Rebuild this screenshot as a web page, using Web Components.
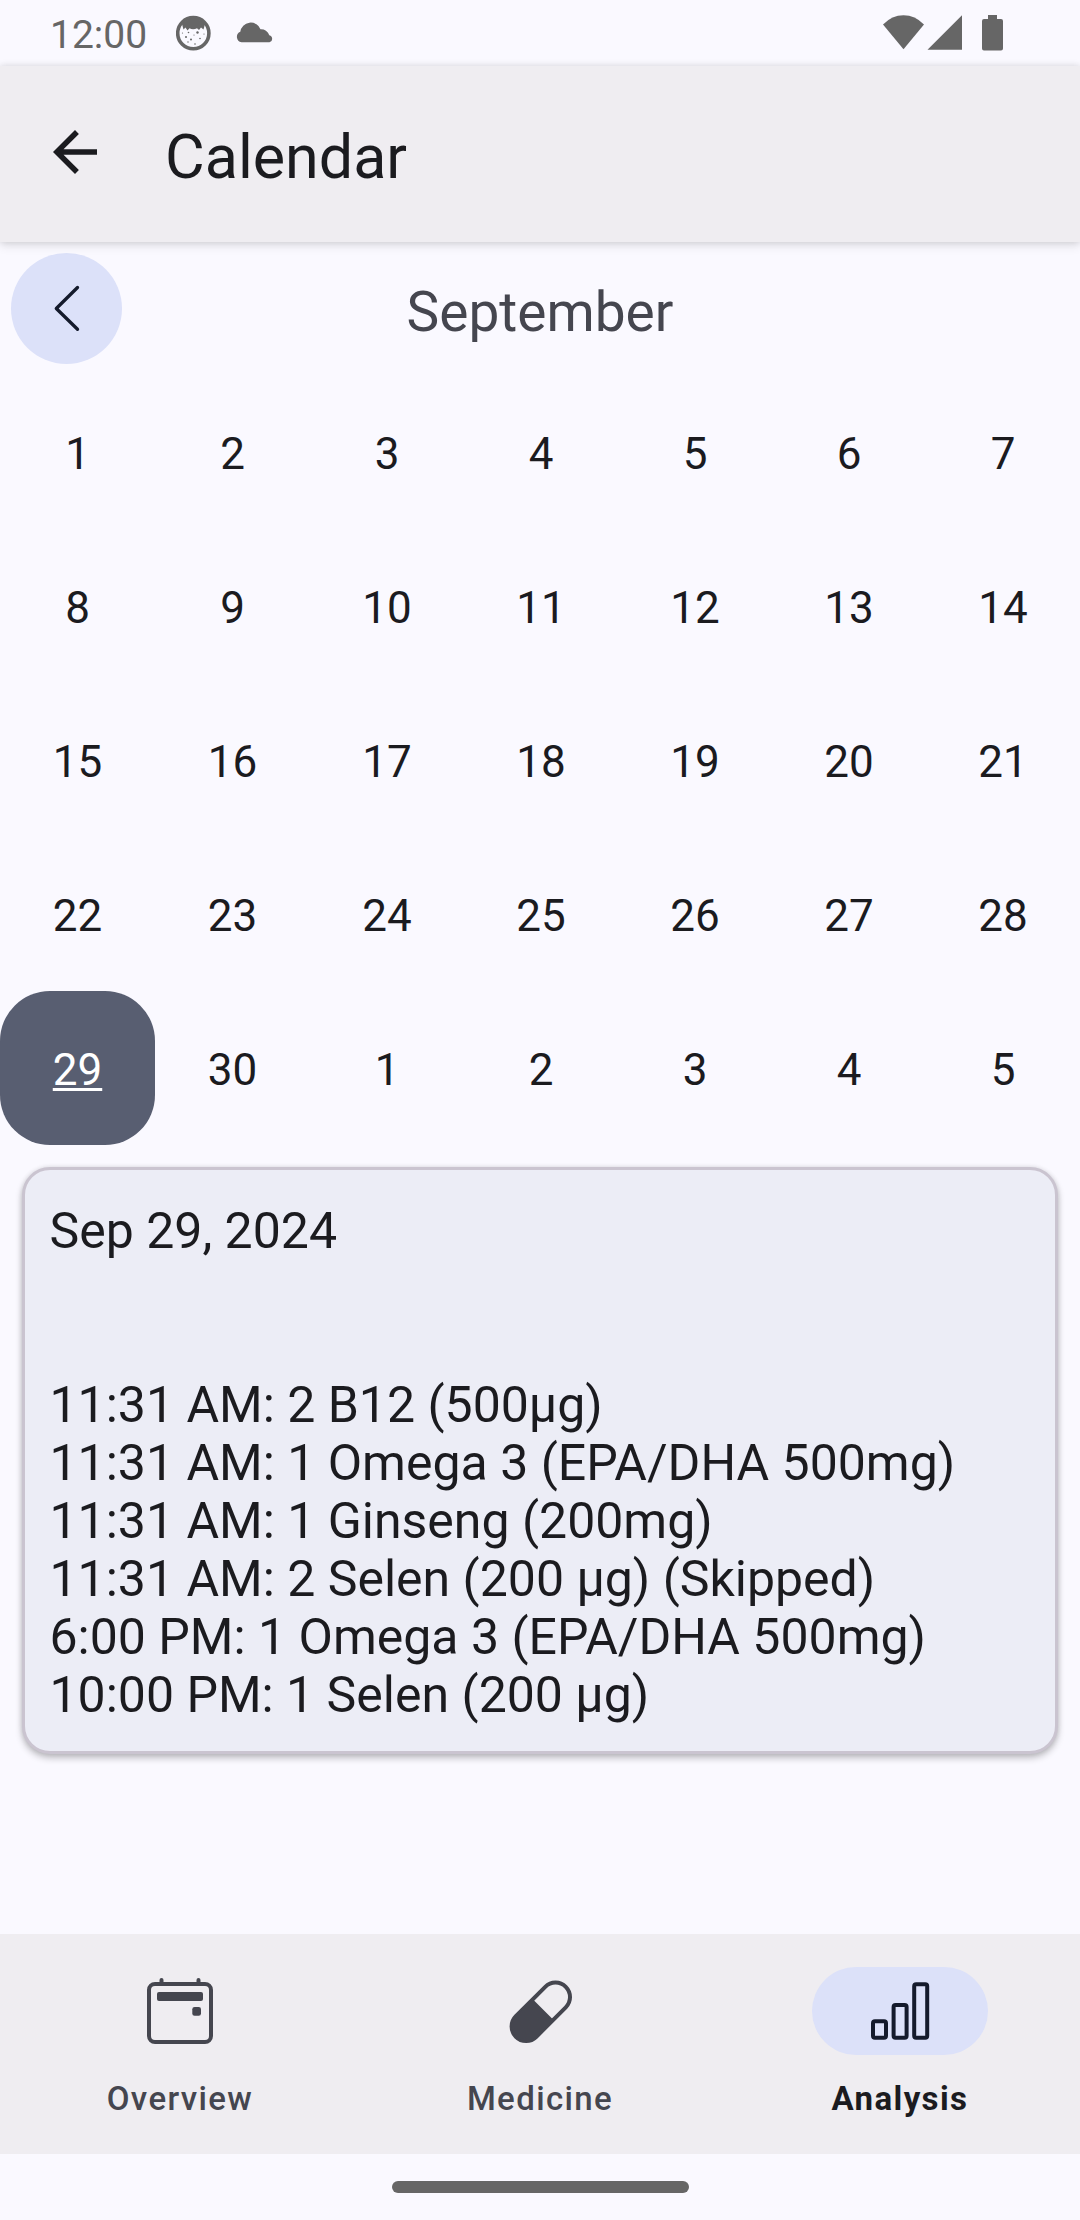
<!DOCTYPE html>
<html lang="en">
<head>
<meta charset="utf-8">
<title>Calendar</title>
<style>
html,body{margin:0;padding:0}
body{width:1080px;height:2220px;overflow:hidden;background:#faf9ff;font-family:Roboto,sans-serif;color:#1b1b1f}
</style>
</head>
<body>
<calendar-app></calendar-app>
<script>
const define = (name, html, setup) => customElements.define(name, class extends HTMLElement {
  connectedCallback() {
    if (this.shadowRoot) return;
    this.attachShadow({mode: 'open'}).innerHTML = html;
    if (setup) setup(this, this.shadowRoot);
  }
});

define('status-bar', `
<style>
:host{display:flex;height:66px;flex:none;box-sizing:border-box;padding:0 76px 0 50px;color:#666;justify-content:space-between}
.side{display:flex;align-items:flex-start}
span{font-size:39px;line-height:46px;padding-top:12px;width:126px}
svg{display:block;fill:#666;flex:none}
</style>
<div class="side"><span>12:00</span>
<svg width="110" height="66" viewBox="176 0 110 66"><circle cx="193.3" cy="33.2" r="15.6" fill="none" stroke="#666" stroke-width="3.6"/>
<path d="M182 24Q193 13 205 24L203.500 29.500L201 27.500L199 30L197 28.200Q193 30.500 189.500 28.200L187.500 30.500L185.500 27.500L183.500 29.500Z"/>
<g><circle cx="186" cy="37" r="1"/><circle cx="197.500" cy="32.500" r="1.200"/><circle cx="191" cy="39.500" r="1"/><circle cx="200" cy="38.500" r=".8"/><circle cx="195" cy="44" r=".8"/><circle cx="188" cy="42" r=".7"/><circle cx="188.500" cy="32.500" r=".8"/><circle cx="204" cy="34" r=".6"/><circle cx="182.500" cy="33" r=".6"/><circle cx="194" cy="35" r=".6"/></g>
<path d="M241.500 42.300A5.500 5.500 0 0 1 240.300 31.800A10.500 10.500 0 0 1 260.500 29.300A8.500 8.500 0 0 1 269.300 35.300A3.600 3.600 0 0 1 269.500 42.300Z"/></svg></div>
<svg width="124" height="66" viewBox="880 0 124 66"><path d="M903.500 49.300L883 24.500Q892 15.300 903.500 15.300T924 24.500Z"/><path d="M927.500 49.700L962 15.300V49.700Z"/><path d="M988 15h9v4h4q2 0 2 2v27.500q0 2-2 2h-17q-2 0-2-2V21q0-2 2-2h4Z"/></svg>`);

define('top-bar', `
<style>
:host{display:flex;flex:none;height:176px;background:#efedf1;position:relative;z-index:1;box-shadow:0 4px 10px rgba(0,0,0,.09),0 0 7px rgba(0,0,0,.13);box-sizing:border-box;padding-left:42px}
svg{display:block;margin-top:53px;flex:none}
h1{margin:0 0 0 57px;font-weight:400;font-size:61px;line-height:70px;padding-top:56px}
</style>
<svg width="66" height="66" viewBox="0 0 24 24" fill="#1b1b1f"><path d="M20 11H7.830l5.590-5.590L12 4l-8 8 8 8 1.410-1.410L7.830 13H20z"/></svg>
<h1><slot></slot></h1>`);

define('month-header', `
<style>
:host{display:grid;flex:none;height:133px;grid-template-columns:111px 1fr 111px;padding:11px 11px 0;box-sizing:border-box;align-items:start}
button{border:0;padding:0;width:111px;height:111px;border-radius:50%;background:#dce1f9}
svg{display:block}
h2{margin:0;text-align:center;font-weight:400;font-size:55px;line-height:64px;padding-top:27px;color:#45464f}
</style>
<button aria-label="Previous month"><svg width="111" height="111" viewBox="11 253 111 111"><path d="M77.500 287.500L56.300 308.500L77.500 329.300" fill="none" stroke="#141a2c" stroke-width="3.300" stroke-linecap="round" stroke-linejoin="round"/></svg></button>
<h2><slot></slot></h2>`);

define('day-cell', `
<style>
:host{display:flex;align-items:center;justify-content:center;font-size:44px;line-height:52px;padding-top:3px;box-sizing:border-box}
:host([selected]){background:#585e71;color:#fff;border-radius:50px}
:host([selected]) span{text-decoration:underline;text-decoration-thickness:2.500px;text-underline-offset:3px;text-decoration-skip-ink:none}
</style><span><slot></slot></span>`);

define('month-grid', `
<style>:host{display:grid;flex:none;grid-template-columns:155px 155px repeat(5,154px);grid-auto-rows:154px}</style>`, (el, root) => {
  for (let i = 1; i <= 35; i++) {
    const d = document.createElement('day-cell');
    d.textContent = i > 30 ? i - 30 : i;
    if (i === 29) d.setAttribute('selected', '');
    root.append(d);
  }
});

define('day-card', `
<style>
:host{display:block;flex:none;box-sizing:border-box;margin:22px 22px 0;height:587px;border:3px solid #cac4d0;border-radius:28px;background:#ecedf6;padding:32px 24.500px;font-size:50px;line-height:58px;box-shadow:0 4px 7px rgba(0,0,0,.24),0 0 5px rgba(0,0,0,.1)}
div{white-space:pre}
</style><div><slot></slot></div>`);

define('nav-item', `
<style>
:host{display:flex;flex:1;flex-direction:column;align-items:center;padding-top:33px;color:#45464f}
.pill{width:176px;height:88px;border-radius:44px}
.pill ::slotted(svg){display:block}
span{font-size:33px;line-height:39px;font-weight:500;letter-spacing:1.375px;margin-top:24px}
:host([active]) .pill{background:#dce1f9}
:host([active]) span{font-weight:700;color:#1b1b1f}
</style><div class="pill"><slot name="icon"></slot></div><span><slot></slot></span>`);

define('bottom-nav', `
<style>:host{display:flex;flex:none;height:220px;background:#efedf1}</style>
<nav-item><svg slot="icon" width="176" height="88" viewBox="92 1967 176 88" fill="#45464f"><path d="M161.500 1984V1980M198.500 1984V1980" stroke="#45464f" stroke-width="4" stroke-linecap="round"/><rect x="149" y="1984" width="62" height="58" rx="6" fill="none" stroke="#45464f" stroke-width="4"/><rect x="157" y="1992" width="46" height="9" rx="2"/><rect x="192.300" y="2007" width="8.700" height="8.700" rx="2.300"/></svg>Overview</nav-item>
<nav-item><svg slot="icon" width="176" height="88" viewBox="452 1967 176 88"><g transform="translate(540.800 2011.800) rotate(-45)"><rect x="-35.300" y="-14.500" width="70.600" height="29" rx="14.500" fill="none" stroke="#45464f" stroke-width="4"/><path d="M3.200-14.500H-20.800a14.500 14.500 0 0 0 0 29H3.200Z" fill="#45464f"/></g></svg>Medicine</nav-item>
<nav-item active><svg slot="icon" width="176" height="88" viewBox="812 1967 176 88" fill="none" stroke="#141a2c" stroke-width="4"><rect x="873" y="2021.300" width="13" height="16.500" rx="2"/><rect x="893.600" y="2005" width="13" height="32.800" rx="2"/><rect x="914.200" y="1984.200" width="13" height="53.600" rx="2"/></svg>Analysis</nav-item>`);

define('gesture-bar', `
<style>:host{display:flex;flex:none;height:66px;justify-content:center;align-items:center}
i{width:297px;height:11.500px;border-radius:6px;background:#666}</style><i></i>`);

define('calendar-app', `
<style>:host{display:flex;flex-direction:column;width:1080px;height:2220px}.gap{flex:1}</style>
<status-bar></status-bar>
<top-bar>Calendar</top-bar>
<month-header>September</month-header>
<month-grid></month-grid>
<day-card>Sep 29, 2024


11:31 AM: 2 B12 (500µg)
11:31 AM: 1 Omega 3 (EPA/DHA 500mg)
11:31 AM: 1 Ginseng (200mg)
11:31 AM: 2 Selen (200 µg) (Skipped)
6:00 PM: 1 Omega 3 (EPA/DHA 500mg)
10:00 PM: 1 Selen (200 µg)</day-card>
<div class="gap"></div>
<bottom-nav></bottom-nav>
<gesture-bar></gesture-bar>`);
</script>
</body>
</html>
